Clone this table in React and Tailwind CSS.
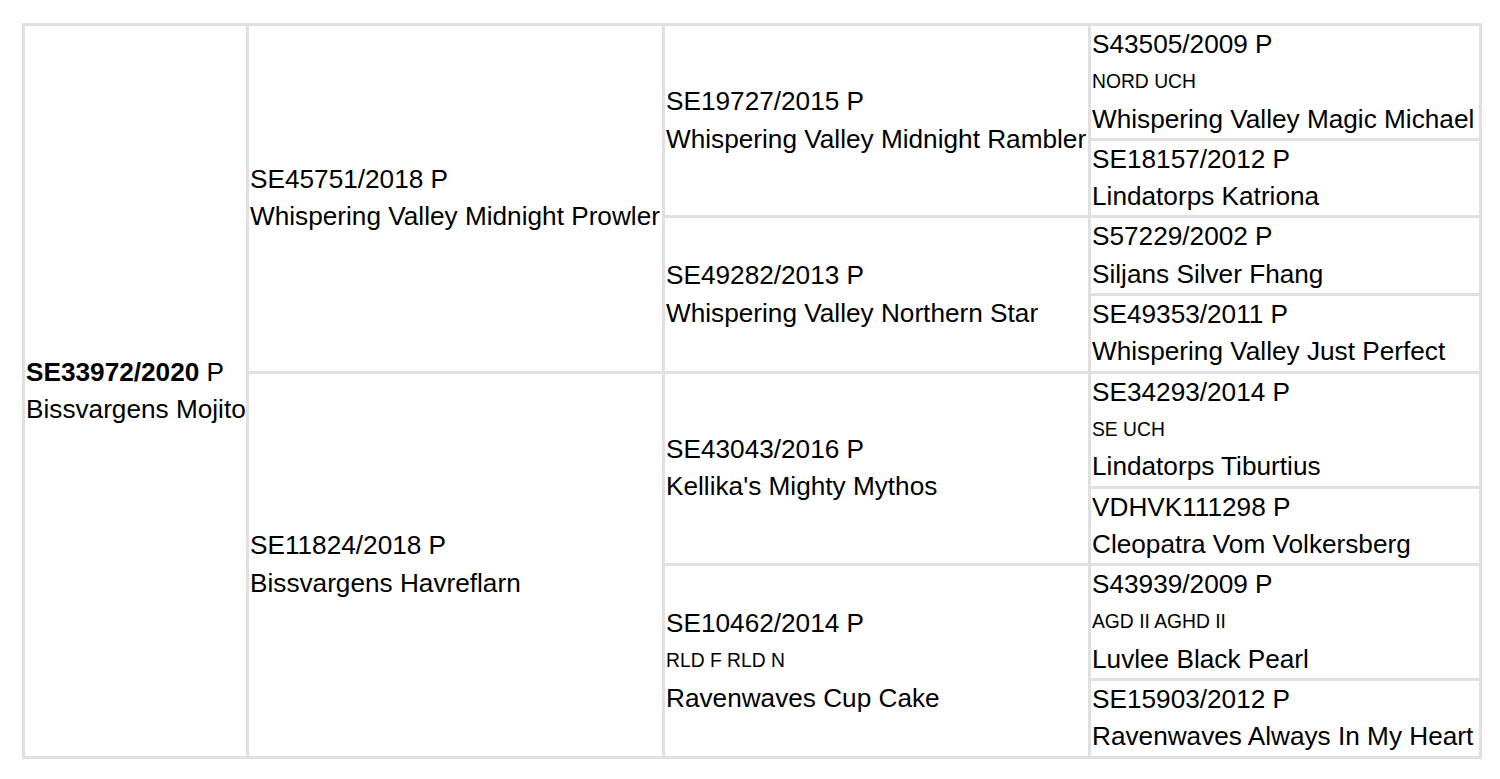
import React from 'react';

// pedigree tree: reg no, optional titles, name, parents
const tree = {
  reg: 'SE33972/2020', name: 'Bissvargens Mojito', bold: true,
  parents: [
    {
      reg: 'SE45751/2018', name: 'Whispering Valley Midnight Prowler',
      parents: [
        {
          reg: 'SE19727/2015', name: 'Whispering Valley Midnight Rambler',
          parents: [
            { reg: 'S43505/2009', titles: 'NORD UCH', name: 'Whispering Valley Magic Michael' },
            { reg: 'SE18157/2012', name: 'Lindatorps Katriona' },
          ],
        },
        {
          reg: 'SE49282/2013', name: 'Whispering Valley Northern Star',
          parents: [
            { reg: 'S57229/2002', name: 'Siljans Silver Fhang' },
            { reg: 'SE49353/2011', name: 'Whispering Valley Just Perfect' },
          ],
        },
      ],
    },
    {
      reg: 'SE11824/2018', name: 'Bissvargens Havreflarn',
      parents: [
        {
          reg: 'SE43043/2016', name: "Kellika's Mighty Mythos",
          parents: [
            { reg: 'SE34293/2014', titles: 'SE UCH', name: 'Lindatorps Tiburtius' },
            { reg: 'VDHVK111298', name: 'Cleopatra Vom Volkersberg' },
          ],
        },
        {
          reg: 'SE10462/2014', titles: 'RLD F RLD N', name: 'Ravenwaves Cup Cake',
          parents: [
            { reg: 'S43939/2009', titles: 'AGD II AGHD II', name: 'Luvlee Black Pearl' },
            { reg: 'SE15903/2012', name: 'Ravenwaves Always In My Heart' },
          ],
        },
      ],
    },
  ],
};

const widths = ['w-[224px]', 'w-[416px]', 'w-[426px]', 'w-[388px]'];

const Dog = ({ dog }) => (
  <div className="pl-[1px] whitespace-nowrap">
    <div className="leading-[37.3px] text-[26.2px]">
      {dog.bold ? <b>{dog.reg}</b> : dog.reg} P
    </div>
    {dog.titles && <div className="leading-[37.3px] text-[19.3px]">{dog.titles}</div>}
    <div className="leading-[37.3px] text-[26.2px]">{dog.name}</div>
  </div>
);

const Branch = ({ dog, depth }) => {
  const last = !dog.parents;
  return (
    <div className="flex">
      <div
        className={`${widths[depth]} shrink-0 flex flex-col justify-center ${
          last ? '' : 'border-r-[3px] border-[#e0e0e0]'
        }`}
      >
        <Dog dog={dog} />
      </div>
      {dog.parents && (
        <div className="flex flex-col divide-y-[3px] divide-[#e0e0e0]">
          {dog.parents.map((p) => (
            <Branch key={p.reg} dog={p} depth={depth + 1} />
          ))}
        </div>
      )}
    </div>
  );
};

export default function App() {
  return (
    <div className="bg-white pt-[23px] pl-[22px] text-black font-['Liberation_Sans',Arial,sans-serif]">
      <div className="inline-flex border-[3px] border-[#e0e0e0]">
        <Branch dog={tree} depth={0} />
      </div>
    </div>
  );
}
